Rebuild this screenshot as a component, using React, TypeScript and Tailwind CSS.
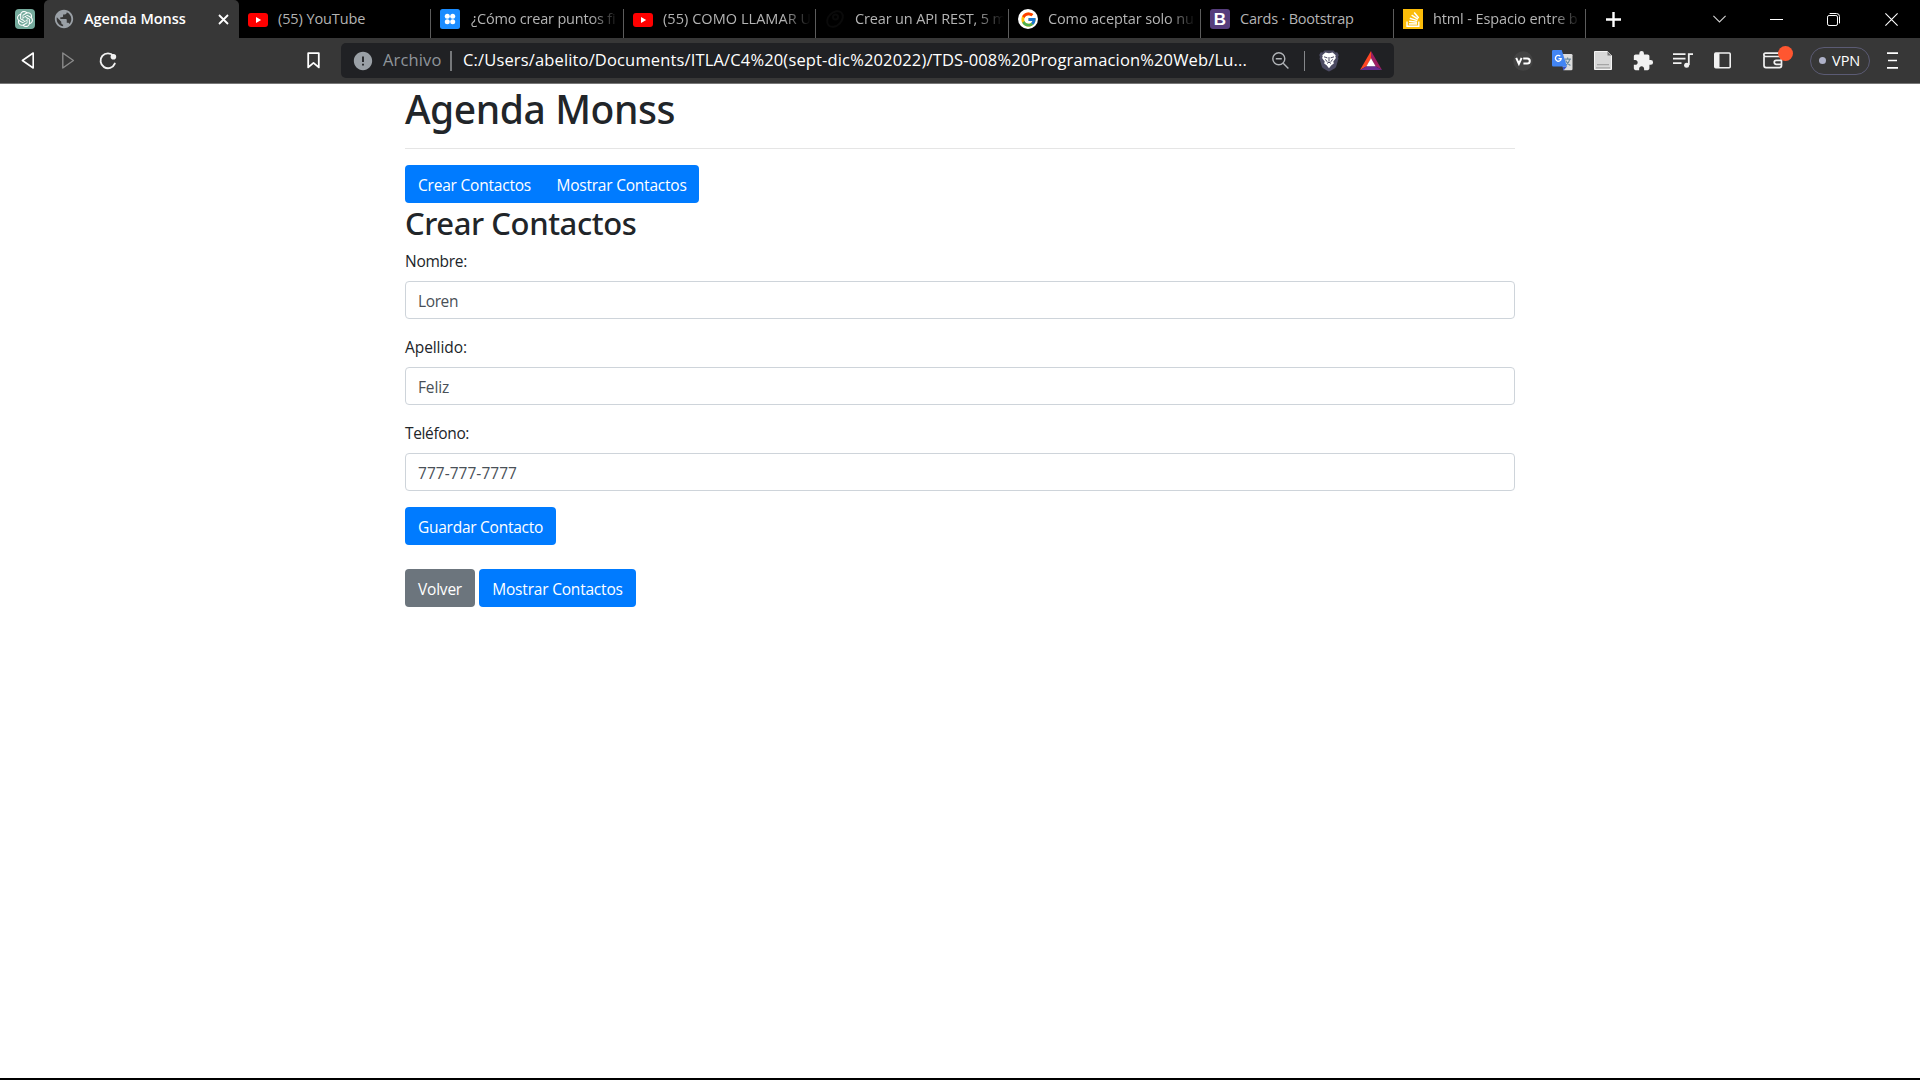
import type { ReactNode } from "react";
import { FcGoogle } from "react-icons/fc";
import { MdError, MdExtension, MdPublic } from "react-icons/md";
import { SiOpenai } from "react-icons/si";

function YouTubeIcon() {
  return (
    <svg className="mt-px h-[14px] w-5" viewBox="0 0 20 14">
      <rect width="20" height="14" rx="3" fill="#ff0000" />
      <path d="M8 4l5.2 3L8 10z" fill="#fff" />
    </svg>
  );
}

function DotsIcon() {
  return (
    <svg className="size-5" viewBox="0 0 20 20">
      <rect width="20" height="20" rx="2.5" fill="#1a8cff" />
      <g fill="#fff">
        <circle cx="7.3" cy="7.3" r="2.5" />
        <circle cx="12.7" cy="7.3" r="2.5" />
        <circle cx="7.3" cy="12.7" r="2.5" />
        <circle cx="12.7" cy="12.7" r="2.5" />
      </g>
    </svg>
  );
}

function DarkIcon() {
  return (
    <svg className="size-5" viewBox="0 0 20 20" fill="none" stroke="#0a0a0a">
      <ellipse cx="10" cy="10" rx="9" ry="6.5" transform="rotate(-45 10 10)" strokeWidth="2" />
      <circle cx="10.5" cy="8" r="2.5" strokeWidth="2" />
    </svg>
  );
}

function GoogleIcon() {
  return (
    <span className="flex size-5 items-center justify-center rounded-full bg-white">
      <FcGoogle size={17} />
    </span>
  );
}

function BootstrapIcon() {
  return (
    <span className="flex size-5 items-center justify-center rounded-[3px] bg-[#563d7c] font-['Liberation_Sans'] text-[17px] leading-none font-bold text-white">
      B
    </span>
  );
}

function StackIcon() {
  return (
    <svg className="size-5" viewBox="0 0 20 20" fill="none" stroke="#fff">
      <rect width="20" height="20" fill="#fbbc09" stroke="none" />
      <path d="M4 12.5V17.2H15.8V12.5" strokeWidth="1.4" />
      <g strokeWidth="1.5">
        <path d="M6 14.9H14" />
        <path d="M6.1 12.2L14 13.2" />
        <path d="M6.8 9.3L14.3 11.6" />
        <path d="M8.6 6.2L15 10.2" />
        <path d="M11.2 3.6L15.7 9" />
      </g>
    </svg>
  );
}

interface TabData {
  icon: ReactNode;
  title: string;
  width: string;
  gap: string;
  tracking: string;
  clipped: boolean;
}

const tabs: TabData[] = [
  { icon: <YouTubeIcon />, title: "(55) YouTube", width: "w-[192px]", gap: "gap-[10px]", tracking: "tracking-[-0.1px]", clipped: false },
  { icon: <DotsIcon />, title: "¿Cómo crear puntos fi", width: "w-[193px]", gap: "gap-[11px]", tracking: "tracking-[-0.2px]", clipped: true },
  { icon: <YouTubeIcon />, title: "(55) COMO LLAMAR U", width: "w-[192px]", gap: "gap-[10px]", tracking: "tracking-[0.05px]", clipped: true },
  { icon: <DarkIcon />, title: "Crear un API REST, 5 m", width: "w-[193px]", gap: "gap-[10px]", tracking: "tracking-[-0.15px]", clipped: true },
  { icon: <GoogleIcon />, title: "Como aceptar solo nu", width: "w-[192px]", gap: "gap-[10px]", tracking: "tracking-[-0.12px]", clipped: true },
  { icon: <BootstrapIcon />, title: "Cards · Bootstrap", width: "w-[193px]", gap: "gap-[10px]", tracking: "tracking-[-0.2px]", clipped: false },
  { icon: <StackIcon />, title: "html - Espacio entre b", width: "w-[192px]", gap: "gap-[10px]", tracking: "tracking-[-0.12px]", clipped: true },
];

function Tab({ icon, title, width, gap, tracking, clipped }: TabData) {
  return (
    <div className={`${width} flex h-[38px] shrink-0 items-end`}>
      <div className={`${gap} flex h-full min-w-0 flex-1 items-center pr-1 pl-[9px]`}>
        <span className="shrink-0">{icon}</span>
        <span
          className={`${tracking} ${
            clipped ? "[mask-image:linear-gradient(to_right,black_calc(100%-28px),transparent)]" : ""
          } min-w-0 flex-1 text-[14.5px] leading-5 whitespace-nowrap text-[#b4b4b4]`}
        >
          {title}
        </span>
      </div>
      <div className="h-[29px] w-px bg-[#5c5c5c]" />
    </div>
  );
}

function TabStrip() {
  return (
    <div className="flex h-[38px] bg-black">
      <div className="flex h-full w-[44px] items-center pl-[15px]">
        <span className="flex size-5 items-center justify-center rounded-[4px] bg-[#74aa9c] text-white">
          <SiOpenai size={16} />
        </span>
      </div>
      <div className="flex h-full w-[195px] items-center rounded-t-[5px] bg-[#373737] pl-[9px]">
        <MdPublic size={22} className="text-[#9aa0a6]" />
        <span className="ml-[9px] w-[134px] text-[14.5px] leading-5 font-semibold whitespace-nowrap text-white">
          Agenda Monss
        </span>
        <svg className="size-[11px]" viewBox="0 0 11 11" stroke="#fff" strokeWidth="1.8">
          <path d="M1 1l9 9M10 1l-9 9" />
        </svg>
      </div>
      {tabs.map((tab) => (
        <Tab key={tab.title} {...tab} />
      ))}
      <div className="flex h-full flex-1 items-center pl-5">
        <svg className="size-[15px]" viewBox="0 0 15 15" stroke="#fff" strokeWidth="2.4">
          <path d="M7.5 0v15M0 7.5h15" />
        </svg>
        <svg className="ml-[92px] h-[8px] w-[13px]" viewBox="0 0 13 8" fill="none" stroke="#d0d0d0" strokeWidth="1.1">
          <path d="M.4.8l6.1 6.1L12.6.8" />
        </svg>
        <svg className="ml-[44px] h-px w-[13px]" viewBox="0 0 13 1">
          <rect width="13" height="1" fill="#fff" />
        </svg>
        <svg className="ml-[44px] size-[13px]" viewBox="0 0 13 13" fill="none" stroke="#fff">
          <rect x=".5" y="2.5" width="10" height="10" rx="1.6" />
          <path d="M2.6.5H9.5a3 3 0 0 1 3 3v6.9" />
        </svg>
        <svg className="ml-[45px] size-[13px]" viewBox="0 0 13 13" stroke="#fff" strokeWidth="1.1">
          <path d="M.4.4l12.2 12.2M12.6.4L.4 12.6" />
        </svg>
      </div>
    </div>
  );
}

function AddressBar() {
  return (
    <div className="ml-[21px] flex h-[35px] w-[1053px] items-center rounded-[5px] bg-[#202124] pl-[11px] whitespace-nowrap">
      <MdError size={22} className="shrink-0 text-[#9aa0a6]" />
      <span className="ml-[9px] w-[67px] text-[16.5px] tracking-[0.13px] text-[#8f959b]">Archivo</span>
      <div className="h-5 w-[2px] bg-[#76787b]" />
      <span className="ml-[11px] w-[809px] text-[16.5px] tracking-[0.15px] text-white">
        C:/Users/abelito/Documents/ITLA/C4%20(sept-dic%202022)/TDS-008%20Programacion%20Web/Lu...
      </span>
      <svg className="size-[17px] shrink-0" viewBox="0 0 17 17" fill="none" stroke="#b0b3b7" strokeWidth="1.4">
        <circle cx="6.8" cy="6.8" r="6" />
        <path d="M3.8 6.8h6M11.2 11.2l5.2 5.2" />
      </svg>
      <div className="ml-[15px] h-5 w-px bg-[#85878a]" />
      <svg className="ml-[14px] h-[22px] w-5 shrink-0" viewBox="0 0 20 22">
        <path d="M5.5.4h9l1.700 2 2-.1 1.600 2.600-.8 2 .5 1.600-2.300 8.100c-.6 1.600-2.600 2.800-7.200 5-4.600-2.200-6.600-3.400-7.200-5L.5 8.500 1 6.900l-.8-2 1.600-2.600 2 .1z" fill="#4c4b63" />
        <path d="M6.400 2.600l3.600.6 3.600-.6 3.100 2.600-.4 1.400.6 1.400-2.600 3.500.5 2-2.400 1.800L10 18.200l-2.400-2.900-2.400-1.800.5-2L3.100 8l.6-1.400-.4-1.400z" fill="#fff" />
        <path d="M5 6.800l3.400 1.100M15 6.800l-3.400 1.100M10 7v4.600M6.400 9.400l1.800 2.400M13.600 9.400l-1.800 2.400M8 13.400l2-1.200 2 1.200" stroke="#4c4b63" fill="none" />
      </svg>
      <svg className="ml-[21px] h-[19px] w-[22px] shrink-0" viewBox="0 0 22 19">
        <path d="M11 0L0 19l6.600-3.700L11 7.600z" fill="#ff4724" />
        <path d="M11 0l11 19-6.600-3.700L11 7.600z" fill="#9e1f63" />
        <path d="M0 19h22l-6.600-3.700H6.600z" fill="#662d91" />
        <path d="M11 7.200l4.600 8.100H6.400z" fill="#fff" />
      </svg>
    </div>
  );
}

function Toolbar() {
  return (
    <div className="flex h-[46px] items-center border-b border-[#777] bg-[#373737]">
      <svg className="ml-[21px] h-[17px] w-[14px]" viewBox="0 0 14 17" fill="none" stroke="#fff" strokeWidth="1.6" strokeLinejoin="round">
        <path d="M12.200 1v15L1.400 8.500z" />
      </svg>
      <svg className="ml-[26px] h-[17px] w-[14px]" viewBox="0 0 14 17" fill="none" stroke="#8a8a8a" strokeWidth="1.4" strokeLinejoin="round">
        <path d="M1.800 1v15L12.400 8.500z" />
      </svg>
      <svg className="ml-[24px] h-[18px] w-[18px]" viewBox="0 0 18 18" fill="none" stroke="#f2f2f2" strokeWidth="1.9">
        <path d="M14.600 4A7.400 7.400 0 1 0 15.800 11.600" strokeLinecap="round" />
        <circle cx="14.4" cy="4.8" r="2.8" fill="#f2f2f2" stroke="none" />
      </svg>
      <svg className="ml-[190px] h-[17px] w-[13px]" viewBox="0 0 13 17" fill="none" stroke="#fff" strokeWidth="1.8" strokeLinejoin="round">
        <path d="M1.200 1.200h10.600v14.200L6.500 10.900 1.200 15.400z" />
      </svg>
      <AddressBar />
      <svg className="ml-[119px] size-5" viewBox="0 0 20 20" fill="none">
        <circle cx="10" cy="10" r="9.8" fill="#434343" />
        <path d="M3.200 6.800l2.700 6 2.700-6M10.200 7.400H14.200a2.600 2.600 0 0 1 0 5.200H10.400" stroke="#fff" strokeWidth="2" />
      </svg>
      <svg className="ml-[19px] size-[21px]" viewBox="0 0 21 21">
        <path d="M8 4h11.200a1.300 1.300 0 0 1 1.300 1.300V19a1.300 1.300 0 0 1-1.300 1.300H11.500z" fill="#dcdcdc" />
        <path d="M10.500 16.500h4.500l-3.500 4z" fill="#3551c9" />
        <path d="M12.500 9.200h6.500M15.600 7.600v1.600M17.800 9.400c-.8 3-2.500 4.800-4 5.800M13.600 10.600c1 2 2.800 3.800 4.800 5" stroke="#6c8a9e" strokeWidth="1.2" fill="none" />
        <path d="M1.300 0h8.400l5.300 16.500H1.300A1.300 1.300 0 0 1 0 15.200V1.300A1.300 1.300 0 0 1 1.300 0z" fill="#4285f4" />
        <path d="M8.300 6.200a2.900 2.900 0 1 0 .9 2.400H6.500" stroke="#fff" strokeWidth="1.3" fill="none" />
      </svg>
      <svg className="ml-[21px] h-[19px] w-[18px]" viewBox="0 0 18 19">
        <path d="M.5.5h13l4 4v14H.5z" fill="#d8d8d8" stroke="#f3f3f3" />
        <path d="M13.500.5v4h4z" fill="#777" />
        <path d="M3 13h12v1.200H3zM2 16.200h14v1.200H2z" fill="#a5a5a5" />
      </svg>
      <MdExtension size={22} className="ml-[20px] shrink-0 text-[#f1f1f1]" />
      <svg className="ml-[19px] h-[17px] w-5" viewBox="0 0 20 17" fill="none" stroke="#f1f1f1" strokeWidth="1.8">
        <path d="M0 2.200h12.500M0 6.700h12.500M0 11.200h8.500" />
        <path d="M15.800 13V2.200H20" />
        <circle cx="13.6" cy="13.2" r="2.5" fill="#f1f1f1" stroke="none" />
      </svg>
      <svg className="ml-[21px] h-[17px] w-[17px]" viewBox="0 0 17 17" fill="none" stroke="#f1f1f1" strokeWidth="1.6">
        <rect x=".8" y="1" width="15.4" height="14.8" rx="1" />
        <path d="M1 1h4.500v15H1z" fill="#f1f1f1" stroke="none" />
      </svg>
      <div className="relative ml-8 h-[17px] w-5">
        <svg className="h-[17px] w-5" viewBox="0 0 20 17" fill="none" stroke="#f1f1f1" strokeWidth="1.7">
          <path d="M1 4.500V13.600a2 2 0 0 0 2 2H16.500a2 2 0 0 0 2-2V6.500a2 2 0 0 0-2-2H2.500A1.500 1.500 0 0 1 2.500 1.200H16.500" />
          <path d="M18.500 8.400H13.200a1.900 1.900 0 0 0 0 3.900h5.300" />
        </svg>
        <div className="absolute -top-[6px] left-[15px] size-[15px] rounded-full bg-[#ff5630]" />
      </div>
      <div className="ml-[27px] flex h-7 w-[60px] items-center rounded-full border border-[#5b5b74] pl-2">
        <span className="size-[7px] rounded-full bg-[#aeb1c8]" />
        <span className="ml-[6px] text-[14.5px] leading-5 text-white">VPN</span>
      </div>
      <svg className="ml-[17px] h-[17px] w-[11px]" viewBox="0 0 11 17" stroke="#fff" strokeWidth="1.7">
        <path d="M0 1.200h11M1 8.500h9M0 15.800h11" />
      </svg>
    </div>
  );
}

function Button({ children, className }: { children: ReactNode; className: string }) {
  return (
    <button
      type="button"
      className={`${className} flex h-[38px] items-center justify-center pt-px text-[15.5px] leading-6 whitespace-nowrap text-white`}
    >
      {children}
    </button>
  );
}

function Field({ label, value, labelClass, valueClass }: { label: string; value: string; labelClass: string; valueClass: string }) {
  return (
    <div className="mb-4">
      <label className={`${labelClass} mb-2 block text-[15.5px] leading-6 text-[#212529]`}>{label}</label>
      <input
        defaultValue={value}
        className={`${valueClass} block h-[38px] w-full rounded-[4px] border border-[#ced4da] bg-white px-3 pt-[2px] text-[15.5px] leading-6 text-[#495057]`}
      />
    </div>
  );
}

export default function App() {
  return (
    <div className="flex h-[1080px] w-[1920px] flex-col overflow-hidden border-b-2 border-black bg-white font-['Open_Sans','Noto_Sans',sans-serif]">
      <TabStrip />
      <Toolbar />
      <main className="mx-auto w-[1110px]">
        <h1 className="h-12 font-['Noto_Sans',sans-serif] text-[39px] leading-[50px] font-medium tracking-[-0.43px] text-[#212529]">
          Agenda Monss
        </h1>
        <hr className="my-4 border-[#e5e5e5]" />
        <div className="flex">
          <Button className="w-[139px] rounded-l-[4px] bg-[#007bff] tracking-[-0.21px]">Crear Contactos</Button>
          <Button className="w-[155px] rounded-r-[4px] bg-[#007bff] tracking-[-0.22px]">Mostrar Contactos</Button>
        </div>
        <h2 className="mb-2 h-[38.4px] font-['Noto_Sans',sans-serif] text-[31px] leading-[41px] font-medium tracking-[-0.42px] text-[#212529]">
          Crear Contactos
        </h2>
        <Field label="Nombre:" value="Loren" labelClass="tracking-[-0.27px]" valueClass="tracking-[-0.39px]" />
        <Field label="Apellido:" value="Feliz" labelClass="tracking-[-0.07px]" valueClass="tracking-[-0.16px]" />
        <Field label="Teléfono:" value="777-777-7777" labelClass="tracking-[-0.36px]" valueClass="tracking-[0.03px]" />
        <Button className="w-[151px] rounded-[4px] bg-[#007bff] tracking-[-0.26px]">Guardar Contacto</Button>
        <div className="mt-6 flex gap-1">
          <Button className="w-[70px] rounded-[4px] bg-[#6c757d] tracking-[-0.21px]">Volver</Button>
          <Button className="w-[157px] rounded-[4px] bg-[#007bff] tracking-[-0.2px]">Mostrar Contactos</Button>
        </div>
      </main>
    </div>
  );
}
